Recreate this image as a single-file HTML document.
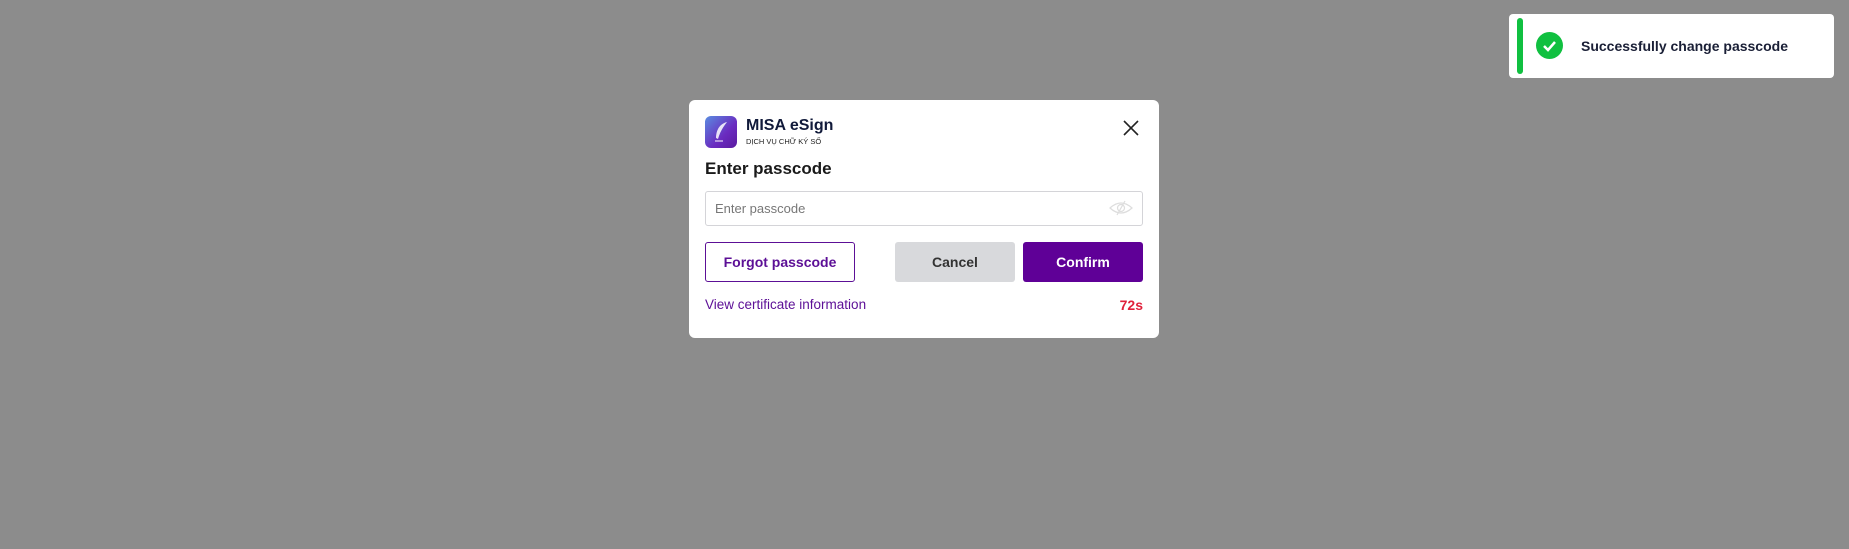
<!DOCTYPE html>
<html><head><style>
*{box-sizing:border-box;margin:0;padding:0}
body{width:1849px;height:549px;background:#8c8c8c;font-family:"Liberation Sans",sans-serif;position:relative;overflow:hidden}
.modal{position:absolute;left:689px;top:100px;width:470px;height:238px;background:#fff;border-radius:6px}
.abs{position:absolute}
.btn{position:absolute;top:142px;height:40px;border-radius:3px;font-weight:bold;font-size:14px;display:flex;align-items:center;justify-content:center}
.toast{position:absolute;left:1509px;top:14px;width:325px;height:64px;background:#fff;border-radius:4px}
</style></head><body>
<div class="modal">
  <div class="abs" style="left:16px;top:16px;width:32px;height:32px;border-radius:6px;background:linear-gradient(135deg,#5a8de0,#6a2bc0 60%,#5a1a9e)">
    <svg width="32" height="32" viewBox="0 0 32 32"><path d="M22 6C14 8 11 15 11 22l2 1c2-7 5-12 9-17z" fill="#fff" opacity=".85"/><path d="M10 25h8" stroke="#fff" stroke-width="1"/></svg>
  </div>
  <div class="abs" style="left:57px;top:17px;font-size:16px;font-weight:bold;color:#111a3a">MISA eSign</div>
  <div class="abs" style="left:57px;top:37px;font-size:7.5px;color:#222">DỊCH VỤ CHỮ KÝ SỐ</div>
  <svg class="abs" style="left:433px;top:19px" width="18" height="18" viewBox="0 0 18 18"><path d="M2 2L16 16M16 2L2 16" stroke="#222" stroke-width="1.6"/></svg>
  <div class="abs" style="left:16px;top:59px;font-size:17px;font-weight:bold;color:#1a1a1a">Enter passcode</div>
  <div class="abs" style="left:16px;top:91px;width:438px;height:35px;border:1px solid #d4d4d8;border-radius:3px"></div>
  <div class="abs" style="left:26px;top:101px;font-size:13px;color:#777">Enter passcode</div>
  <svg class="abs" style="left:420px;top:99px" width="24" height="18" viewBox="0 0 24 18"><path d="M1 9Q12 -1 23 9Q12 19 1 9z" fill="none" stroke="#ddd" stroke-width="1.2"/><circle cx="12" cy="9" r="3.5" fill="none" stroke="#ddd" stroke-width="1.2"/><path d="M16 2L8 16" stroke="#ddd" stroke-width="1.2"/></svg>
  <div class="btn" style="left:16px;width:150px;border:1px solid #5c0f96;color:#5c0f96">Forgot passcode</div>
  <div class="btn" style="left:206px;width:120px;background:#d8d9dc;color:#333">Cancel</div>
  <div class="btn" style="left:334px;width:120px;background:#5f0097;color:#fff">Confirm</div>
  <div class="abs" style="left:16px;top:197px;font-size:13.5px;color:#5c0f96">View certificate information</div>
  <div class="abs" style="right:16px;top:197px;font-size:14px;font-weight:bold;color:#e0203a">72s</div>
</div>
<div class="toast">
  <div class="abs" style="left:8px;top:4px;width:6px;height:56px;background:#10c040;border-radius:3px"></div>
  <svg class="abs" style="left:27px;top:18px" width="27" height="27" viewBox="0 0 27 27"><circle cx="13.5" cy="13.5" r="13.5" fill="#10c040"/><path d="M8 14l4 4 7-8" fill="none" stroke="#fff" stroke-width="2.5"/></svg>
  <div class="abs" style="left:72px;top:24px;font-size:14px;font-weight:bold;color:#1a1f36">Successfully change passcode</div>
</div>
</body></html>
